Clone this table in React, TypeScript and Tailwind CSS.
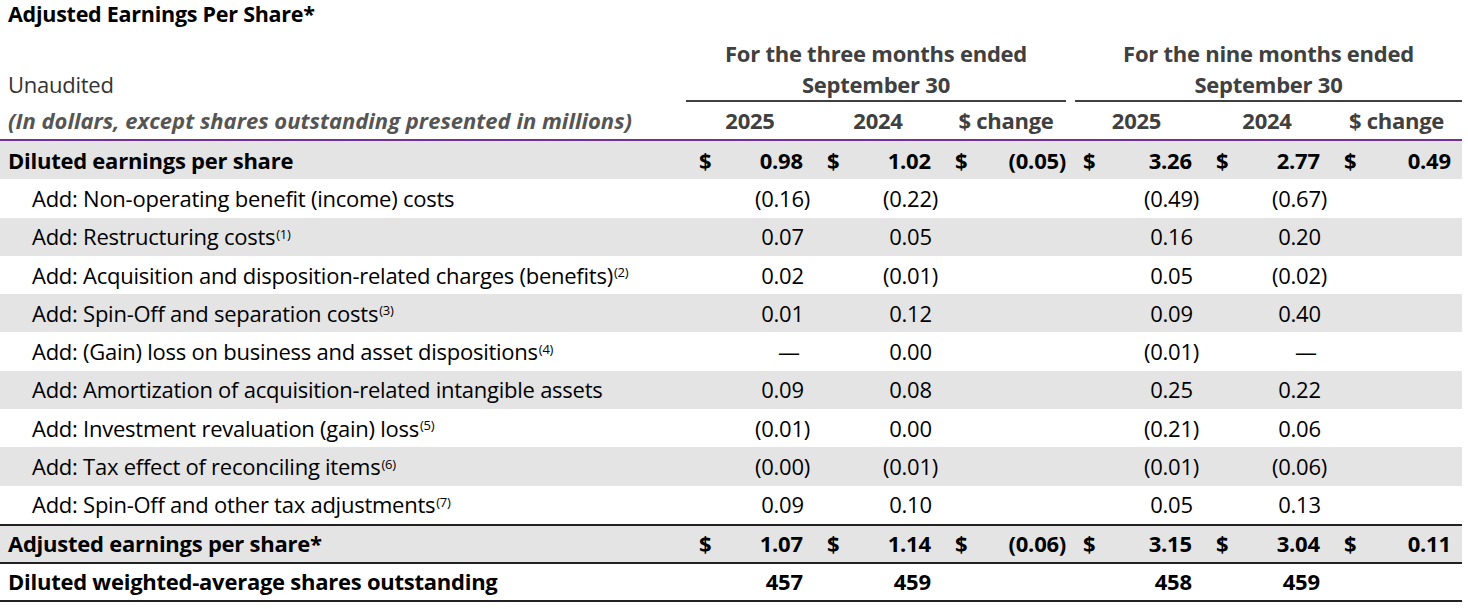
import React from "react";

type Row = {
  label: string;
  note?: string;
  values: string[];
  bold?: boolean;
  dollar?: boolean;
  shaded?: boolean;
  indent?: boolean;
};

const rows: Row[] = [
  { label: "Diluted earnings per share", values: ["0.98", "1.02", "(0.05)", "3.26", "2.77", "0.49"], bold: true, dollar: true, shaded: true },
  { label: "Add: Non-operating benefit (income) costs", values: ["(0.16)", "(0.22)", "", "(0.49)", "(0.67)", ""], indent: true },
  { label: "Add: Restructuring costs", note: "(1)", values: ["0.07", "0.05", "", "0.16", "0.20", ""], indent: true, shaded: true },
  { label: "Add: Acquisition and disposition-related charges (benefits)", note: "(2)", values: ["0.02", "(0.01)", "", "0.05", "(0.02)", ""], indent: true },
  { label: "Add: Spin-Off and separation costs", note: "(3)", values: ["0.01", "0.12", "", "0.09", "0.40", ""], indent: true, shaded: true },
  { label: "Add: (Gain) loss on business and asset dispositions", note: "(4)", values: ["—", "0.00", "", "(0.01)", "—", ""], indent: true },
  { label: "Add: Amortization of acquisition-related intangible assets", values: ["0.09", "0.08", "", "0.25", "0.22", ""], indent: true, shaded: true },
  { label: "Add: Investment revaluation (gain) loss", note: "(5)", values: ["(0.01)", "0.00", "", "(0.21)", "0.06", ""], indent: true },
  { label: "Add: Tax effect of reconciling items", note: "(6)", values: ["(0.00)", "(0.01)", "", "(0.01)", "(0.06)", ""], indent: true, shaded: true },
  { label: "Add: Spin-Off and other tax adjustments", note: "(7)", values: ["0.09", "0.10", "", "0.05", "0.13", ""], indent: true },
];

const cols = "grid grid-cols-[686px_128px_128px_128px_133px_128px_131px]";

function Value({ v, dollar }: { v: string; dollar?: boolean }) {
  const paren = v.endsWith(")");
  const dash = v === "—";
  return (
    <div className={`flex items-center justify-between ${dash ? "pr-[8px]" : "pr-[4px]"} ${dollar ? "pl-[13px]" : ""}`}>
      <span>{dollar ? "$" : ""}</span>
      <span>
        {v}
        {v && !paren ? <span className="invisible">)</span> : null}
      </span>
    </div>
  );
}

function DataRow({ row, className = "" }: { row: Row; className?: string }) {
  return (
    <div className={`${cols} ${row.shaded ? "bg-[#e4e4e4]" : "bg-white"} ${row.bold ? "font-bold" : ""} ${className}`}>
      <div className={`flex items-center ${row.indent ? "pl-[32px]" : "pl-[8px]"}`}>
        {row.label}
        {row.note ? <sup className="text-[13px] relative -top-[3px] ml-[1px]">{row.note}</sup> : null}
      </div>
      {row.values.map((v, i) => (
        <Value key={i} v={v} dollar={row.dollar} />
      ))}
    </div>
  );
}

export default function App() {
  return (
    <div className="w-[1462px] bg-white text-[22px] tracking-[-0.25px] text-black font-['Open_Sans',sans-serif]">
      <div className="h-[28px] pl-[8px] flex items-center font-bold text-[21.5px]">Adjusted Earnings Per Share*</div>

      {/* group headers */}
      <div className="grid grid-cols-[686px_384px_392px] h-[74px]">
        <div className="self-end pl-[8px] leading-[31px] pb-[2px] text-[#333]">Unaudited</div>
        <div className="pt-[10px] pr-[4px]">
          <div className="border-b-2 border-[#404040] text-center font-bold text-[#404040] leading-[31px]">
            For the three months ended
            <br />
            September 30
          </div>
        </div>
        <div className="pt-[10px] pl-[5px]">
          <div className="border-b-2 border-[#404040] text-center font-bold text-[#404040] leading-[31px]">
            For the nine months ended
            <br />
            September 30
          </div>
        </div>
      </div>

      {/* column headers */}
      <div className={`${cols} h-[39px] border-b-2 border-[#7030a0] font-bold text-[#404040]`}>
        <div className="flex items-center pl-[8px] italic tracking-[0px] text-[#555]">
          (In dollars, except shares outstanding presented in millions)
        </div>
        <div className="flex items-center justify-center">2025</div>
        <div className="flex items-center justify-center">2024</div>
        <div className="flex items-center justify-center">$ change</div>
        <div className="flex items-center justify-center">2025</div>
        <div className="flex items-center justify-center">2024</div>
        <div className="flex items-center justify-center">$ change</div>
      </div>

      <div className="flex flex-col [&>div]:h-[38.3px]">
        {rows.map((r, i) => (
          <DataRow key={i} row={r} />
        ))}
      </div>

      <DataRow
        row={{ label: "Adjusted earnings per share*", values: ["1.07", "1.14", "(0.06)", "3.15", "3.04", "0.11"], bold: true, dollar: true, shaded: true }}
        className="h-[40px] border-y-2 border-[#222]"
      />
      <DataRow
        row={{ label: "Diluted weighted-average shares outstanding", values: ["457", "459", "", "458", "459", ""], bold: true }}
        className="h-[38px] border-b-2 border-[#222]"
      />
    </div>
  );
}
